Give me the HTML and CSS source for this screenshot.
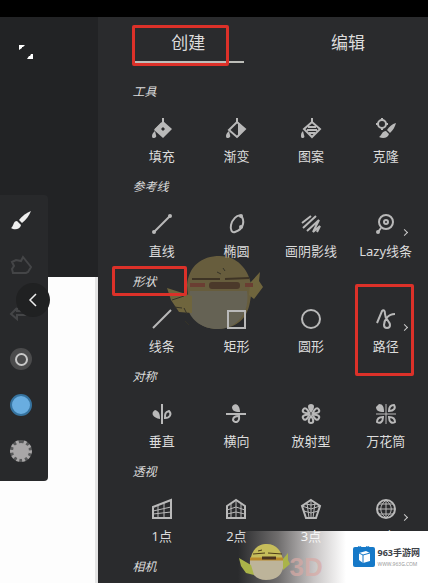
FILE: index.html
```html
<!DOCTYPE html>
<html lang="zh-CN">
<head>
  <meta charset="UTF-8" />
  <meta name="viewport" content="width=device-width, initial-scale=1.0"/>
  <title>绘画工具</title>
  <link rel="stylesheet" href="styles.css">
</head>
<body>
  <div class="status-bar"></div>
  <main class="app">
    <section class="workspace">
      <div class="top-area">
        <button class="fullscreen-btn" aria-label="全屏">
          <svg width="14" height="14" viewBox="0 0 14 14"><path d="M0 0h6l-2 2H3v1L0 5zM14 9v5H8l2-3h1l1-2z" fill="#fff"/></svg>
        </button>
      </div>
      <div class="canvas"></div>

      <div class="toolbar">
        <button class="tool-btn" aria-label="画笔">
          <svg width="24" height="24" viewBox="0 0 24 24" fill="#eee"><path d="M22 2c-5 2-9 5-12 9l3 3c4-3 7-7 9-12z"/><path d="M8 12c-4 0-3 5-6 7 3 2 9 2 10-3z"/></svg>
        </button>
        <button class="tool-btn" aria-label="涂抹">
          <svg width="24" height="24" viewBox="0 0 24 24" class="dim"><path d="M3 7l4-2 5 1 2-4 4 5 4 5-3 5-2 1H4l-1-4 2-3z"/></svg>
        </button>
        <button class="tool-btn" aria-label="撤销">
          <svg width="24" height="24" viewBox="0 0 24 24" class="dim"><path d="M8 7l-6 6 6 5v-4h8c4-1 4-5 1-7M8 7v3h5"/></svg>
        </button>
        <button class="tool-btn" aria-label="画笔大小"><span class="dot dot-size"></span></button>
        <button class="tool-btn" aria-label="颜色"><span class="dot dot-color"></span></button>
        <button class="tool-btn" aria-label="图层"><span class="dot dot-layer"></span></button>
      </div>
      <button class="collapse-btn" aria-label="收起">
        <svg width="10" height="14" viewBox="0 0 10 14"><path d="M8 1L2 7l6 6" fill="none" stroke="#eee" stroke-width="1.5"/></svg>
      </button>
    </section>

    <aside class="panel">
      <nav class="tabs">
        <button class="tab active">创建<span class="mark mark-tab"></span></button>
        <button class="tab">编辑</button>
      </nav>

      <section class="group">
        <h2>工具</h2>
        <div class="items">
          <button class="item">
            <svg class="icon" viewBox="0 0 24 24"><path d="M13 1v8M5 13l7-7" /><path class="fill" fill-rule="evenodd" d="M13 4l9 8-9 9-9-8zM13 10l-2 2 2 2 2-2z"/><path class="fill" d="M5 14c-2 2-3 3-3 5s1 2 2 2 3-1 2-3z"/></svg>
            <span>填充</span>
          </button>
          <button class="item">
            <svg class="icon" viewBox="0 0 24 24"><path d="M13 1v4M5 13l8-8 8 7-8 8z"/><path class="fill" d="M14 5l7 7-7 8z"/><path class="fill" d="M5 14c-2 2-3 3-3 5s1 2 2 2 3-1 2-3z"/></svg>
            <span>渐变</span>
          </button>
          <button class="item">
            <svg class="icon" viewBox="0 0 24 24"><path d="M13 1v4M5 12l8-7 8 7-8 8zM9 10h8M8 13h10M10 16h6"/><path class="fill" d="M4 14c-2 2-2 3-2 5s1 2 2 2 2-1 1-3z"/></svg>
            <span>图案</span>
          </button>
          <button class="item">
            <svg class="icon" viewBox="0 0 24 24"><circle cx="8" cy="7" r="4"/><path d="M8 1v3M8 10v3M2 7h3M11 7h3"/><path class="fill" d="M22 6c-4 1-7 4-9 7l3 3c3-3 5-6 6-10zM12 14c-4 0-4 4-7 6 4 2 9 1 10-3z"/></svg>
            <span>克隆</span>
          </button>
        </div>
      </section>

      <section class="group">
        <h2>参考线</h2>
        <div class="items">
          <button class="item">
            <svg class="icon" viewBox="0 0 24 24"><path d="M4 20L20 4"/><circle class="fill" cx="4" cy="20" r="2"/><circle class="fill" cx="20" cy="4" r="2"/></svg>
            <span>直线</span>
          </button>
          <button class="item">
            <svg class="icon" viewBox="0 0 24 24"><path d="M17 4c-4-2-9 4-10 9s1 8 4 7 7-3 8-8-1-7-2-8z"/><circle class="fill" cx="17" cy="4" r="2"/><circle class="fill" cx="17" cy="15" r="2"/></svg>
            <span>椭圆</span>
          </button>
          <button class="item">
            <svg class="icon" viewBox="0 0 24 24"><path d="M3 11l9-7M4 16L17 4M8 19L20 8l-6 12 7-6-3 6"/></svg>
            <span>画阴影线</span>
          </button>
          <button class="item">
            <svg class="icon" viewBox="0 0 24 24"><circle cx="12" cy="10" r="7"/><circle cx="12" cy="10" r="2"/><path d="M7 16l-3 4"/><circle class="fill" cx="4" cy="20" r="2"/></svg>
            <span>Lazy线条</span>
            <i class="more"></i>
          </button>
        </div>
      </section>

      <section class="group">
        <h2>形状<span class="mark mark-title"></span></h2>
        <div class="items">
          <button class="item">
            <svg class="icon" viewBox="0 0 24 24"><path d="M3 21L21 3"/></svg>
            <span>线条</span>
          </button>
          <button class="item">
            <svg class="icon" viewBox="0 0 24 24"><path d="M4 4h17v17H4z"/></svg>
            <span>矩形</span>
          </button>
          <button class="item">
            <svg class="icon" viewBox="0 0 24 24"><circle cx="12" cy="12" r="9"/></svg>
            <span>圆形</span>
          </button>
          <button class="item">
            <svg class="icon" viewBox="0 0 24 24"><path d="M3 16L8 4c2-2 3 0 3 3 0 6 5 7 5 11 0 4-6 4-6 0 0-5 4-11 11-11"/></svg>
            <span>路径</span>
            <i class="more"></i>
            <i class="mark mark-item"></i>
          </button>
        </div>
      </section>

      <section class="group">
        <h2>对称</h2>
        <div class="items">
          <button class="item">
            <svg class="icon" viewBox="0 0 24 24"><path d="M12 2v20M15 16c0-4 0-6 4-7 3 3 1 7-4 7z"/><path class="fill" d="M10 17C10 12 9 9 5 8c-5 3-2 8 5 9z"/></svg>
            <span>垂直</span>
          </button>
          <button class="item">
            <svg class="icon" viewBox="0 0 24 24"><path d="M2 12h20M15 14c-4 0-6 1-6 4 2 4 7 2 6-4z"/><path class="fill" d="M16 10C10 10 8 8 8 5c2-5 8-3 8 5z"/></svg>
            <span>横向</span>
          </button>
          <button class="item">
            <svg class="icon" viewBox="0 0 24 24">
              <path class="fill" d="M12 11C8 6 8 2 12 2s4 4 0 9z"/>
              <path d="M12 10C9 6 9 3 12 3s3 3 0 7z" transform="rotate(60 12 12)"/>
              <path d="M12 10C9 6 9 3 12 3s3 3 0 7z" transform="rotate(120 12 12)"/>
              <path d="M12 10C9 6 9 3 12 3s3 3 0 7z" transform="rotate(180 12 12)"/>
              <path d="M12 10C9 6 9 3 12 3s3 3 0 7z" transform="rotate(240 12 12)"/>
              <path d="M12 10C9 6 9 3 12 3s3 3 0 7z" transform="rotate(300 12 12)"/>
            </svg>
            <span>放射型</span>
          </button>
          <button class="item">
            <svg class="icon" viewBox="0 0 24 24"><path class="fill" d="M10 10C4 10 2 8 2 5l3-3c4 0 5 3 5 8z"/><path class="slim" d="M12 2v20M2 12h20"/><path d="M15 9c0-4 2-6 5-6 2 3 0 6-5 6zM9 15c-4 0-6 2-6 5 3 2 6 0 6-5zM15 15c4 0 6 2 6 5-3 2-6 0-6-5z"/></svg>
            <span>万花筒</span>
          </button>
        </div>
      </section>

      <section class="group">
        <h2>透视</h2>
        <div class="items">
          <button class="item">
            <svg class="icon" viewBox="0 0 24 24"><path d="M3 10l18-7v18H3z"/><path class="slim" d="M8 8v13M14 6v15M3 14l18-4M3 17l18-2"/></svg>
            <span>1点</span>
          </button>
          <button class="item">
            <svg class="icon" viewBox="0 0 24 24"><path d="M3 9l9-6 9 6v12H3z"/><path class="slim" d="M12 3v18M7 7v14M17 7v14M3 13l9-3 9 3M3 17l9-2 9 2"/></svg>
            <span>2点</span>
          </button>
          <button class="item">
            <svg class="icon" viewBox="0 0 24 24"><path d="M12 3l9 6-4 12H7L3 9z"/><path class="slim" d="M12 3v18M8 6l2 15M16 6l-2 15M3 9l9 3 9-3M5 14l7 2 7-2M7 7l5 1 5-1"/></svg>
            <span class="on-banner">3点</span>
          </button>
          <button class="item">
            <svg class="icon" viewBox="0 0 24 24"><circle cx="12" cy="12" r="9"/><path class="slim" d="M12 3v18M3 12h18M5 7h14M5 17h14M12 3c-7 6-7 12 0 18M12 3c7 6 7 12 0 18"/></svg>
            <span>5点</span>
            <i class="more"></i>
          </button>
        </div>
      </section>

      <section class="group last">
        <h2>相机</h2>
      </section>
    </aside>

    <svg class="bird-watermark" viewBox="0 0 100 80">
      <path d="M22 33C24 14 36 4 55 4c17 0 28 13 31 28 2 5 0 12-1 18-3 17-13 26-32 27-16 0-26-9-29-22z" fill="#887846"/>
      <path d="M25 39h57c3 20-8 37-29 38-17 0-29-10-31-24z" fill="#85806a"/>
      <path d="M85 31l10-11-1 9 4 6-9 12-5-4zM27 44L2 36l4 12 8 12 13 1z" fill="#958446"/>
      <path d="M27 27h28M60 27l24-1" stroke="#4a3a22" stroke-width="2"/>
      <rect x="44" y="30" width="31" height="7" rx="3" fill="#5e4129"/>
      <path d="M25 33h15M80 33h8" stroke="#8d4936" stroke-width="4"/>
      <path d="M52 20l4 2M58 16l2 3M7 48l12-4M9 55l8 1M22 62l-3-6M24 73l-4-4" stroke="#3c3825" stroke-width="1"/>
    </svg>
  </main>

  <footer class="banner">
    <svg class="banner-bird" width="52" height="42" viewBox="0 0 52 42">
      <path d="M12 20C14 8 20 3 29 3c9 0 15 7 16 17z" fill="#c6bd5b"/>
      <path d="M12 19h33c2 13-5 20-17 20-10 0-17-7-16-20z" fill="#bdb49a"/>
      <path d="M13 24L1 17l2 8 5 7 8 2zM45 18l5-6v7l2 4-7 6z" fill="#aab449"/>
      <path d="M15 13l12-1M30 12l14 1M20 10l4-1" stroke="#4b3c1a" stroke-width="1"/>
      <path d="M12 18h33" stroke="#b98a2c" stroke-width="3"/>
      <path d="M24 17h14" stroke="#4b3420" stroke-width="3"/>
    </svg>
    <span class="banner-ghost">3D</span>
    <svg class="banner-logo" width="22" height="22" viewBox="0 0 22 22">
      <rect y="1" width="22" height="20" rx="2" fill="#1679c8"/>
      <path d="M5 2c0-3 3-2 4 0M13 2c0-3 3-2 4 0" fill="none" stroke="#1679c8"/>
      <path d="M6 7l7-2 4 2v8l-7 2-4-3z" fill="#fff"/>
      <path d="M6 7l4 2 7-2M10 9v8" fill="none" stroke="#1679c8"/>
    </svg>
    <div class="banner-text">
      <strong>963手游网</strong>
      <small>WWW.963G.COM</small>
    </div>
  </footer>
</body>
</html>
```
FILE: styles.css
```css
* {
  box-sizing: border-box;
}
body {
  margin: 0;
  height: 100vh;
  display: flex;
  flex-direction: column;
  position: relative;
  overflow: hidden;
  background-color: #222325;
  color: #dcdcdc;
  font-family: "Noto Sans", "Noto Sans CJK SC", sans-serif;
}
button {
  padding: 0;
  border: none;
  background: none;
  color: inherit;
  font-family: inherit;
  cursor: pointer;
}
svg {
  display: block;
}
.status-bar {
  flex: 0 0 17px;
  background-color: #000;
}
.app {
  flex: 1;
  min-height: 0;
  display: flex;
  position: relative;
}

/* 左侧画布 */
.workspace {
  flex: 0 0 23%;
  display: flex;
  flex-direction: column;
  position: relative;
}
.top-area {
  height: 260px;
  padding: 25px 19px;
}
.canvas {
  flex: 1;
  background-color: #fdfdfd;
  border-right: 3px solid #e4e4e4;
}
.toolbar {
  position: absolute;
  top: 178px;
  left: 0;
  width: 48px;
  padding: 3px 6px 7px 0;
  display: flex;
  flex-direction: column;
  background-color: #28292b;
  border-radius: 0 4px 4px 0;
}
.tool-btn {
  height: 46px;
  display: flex;
  align-items: center;
  justify-content: center;
}
.dim {
  fill: none;
  stroke: #444547;
  stroke-width: 2;
}
.dot {
  width: 22px;
  height: 22px;
  border-radius: 50%;
}
.dot-size {
  display: flex;
  align-items: center;
  justify-content: center;
  background-color: #4b4b4c;
}
.dot-size::before {
  content: "";
  width: 9px;
  height: 9px;
  border: 2px solid #c8c8c8;
  border-radius: 50%;
}
.dot-color {
  background-color: #69ade0;
  border: 2px solid #36739f;
}
.dot-layer {
  background-color: #a9a7a8;
  border: 3px dotted #58595a;
}
.collapse-btn {
  position: absolute;
  top: 266px;
  left: 16px;
  width: 34px;
  height: 34px;
  display: flex;
  align-items: center;
  justify-content: center;
  background-color: #202122;
  border-radius: 50%;
}

/* 右侧面板 */
.panel {
  flex: 1;
  min-width: 0;
  background-color: #2a2b2d;
}
.tabs {
  display: grid;
  grid-template-columns: 1fr 1fr;
  justify-items: center;
  padding: 8px 0 0 10px;
  margin-bottom: 18px;
}
.tab {
  width: 70%;
  height: 38px;
  position: relative;
  border-bottom: 2px solid transparent;
  font-size: 17px;
  line-height: 36px;
}
.tab.active {
  border-bottom-color: #bdbdb8;
}
.group {
  height: 95px;
  padding: 0 5px 0 26px;
}
.group.last {
  height: 22px;
}
.group h2 {
  position: relative;
  z-index: 1;
  margin: 0;
  padding-left: 8px;
  font-size: 12px;
  font-weight: 400;
  font-style: italic;
  line-height: 22px;
}
.items {
  display: grid;
  grid-template-columns: repeat(4, 1fr);
  padding-top: 14px;
}
.item {
  position: relative;
  display: flex;
  flex-direction: column;
  align-items: center;
  gap: 6px;
  font-size: 13px;
  line-height: 18px;
  white-space: nowrap;
}
.icon {
  position: relative;
  z-index: 1;
  width: 24px;
  height: 24px;
  fill: none;
  stroke: #b9b9b9;
  stroke-width: 2;
}
.icon .slim {
  stroke-width: 1;
}
.icon .fill {
  fill: #b9b9b9;
  stroke: none;
}
.more {
  position: absolute;
  top: 18px;
  right: 16px;
  width: 5px;
  height: 5px;
  border-top: 1px solid #ccc;
  border-right: 1px solid #ccc;
  transform: rotate(45deg);
}
.on-banner {
  position: relative;
  z-index: 2;
  color: #f4f4f4;
}

/* 红框标注 */
.mark {
  position: absolute;
  border: 3px solid #dc3129;
  border-radius: 2px;
}
.mark-tab {
  top: 0;
  left: 0;
  width: 97px;
  height: 41px;
}
.mark-title {
  top: -5px;
  left: -12px;
  width: 75px;
  height: 30px;
}
.mark-item {
  top: -23px;
  left: 7px;
  right: 9px;
  height: 92px;
}

/* 水印 */
.bird-watermark {
  position: absolute;
  top: 235px;
  left: 165px;
  width: 100px;
  height: 80px;
  opacity: 0.65;
  pointer-events: none;
}
.banner {
  position: absolute;
  right: 0;
  bottom: 0;
  height: 52px;
  padding-right: 8px;
  display: flex;
  align-items: center;
  background: linear-gradient(90deg, rgba(80, 80, 80, 0) 0, #6f6d6d 40px, #c8c5c5 76px, #fff 108px);
}
.banner-bird {
  align-self: flex-end;
}
.banner-ghost {
  align-self: flex-end;
  width: 63px;
  color: #d8aaa5;
  font: 700 26px/32px "Liberation Sans", sans-serif;
  opacity: 0.7;
}
.banner-logo {
  margin-right: 3px;
}
.banner-text {
  display: flex;
  flex-direction: column;
  color: #3c4248;
}
.banner-text strong {
  font-size: 9px;
  line-height: 14px;
}
.banner-text small {
  color: #999;
  font-size: 5px;
  line-height: 8px;
}
```
